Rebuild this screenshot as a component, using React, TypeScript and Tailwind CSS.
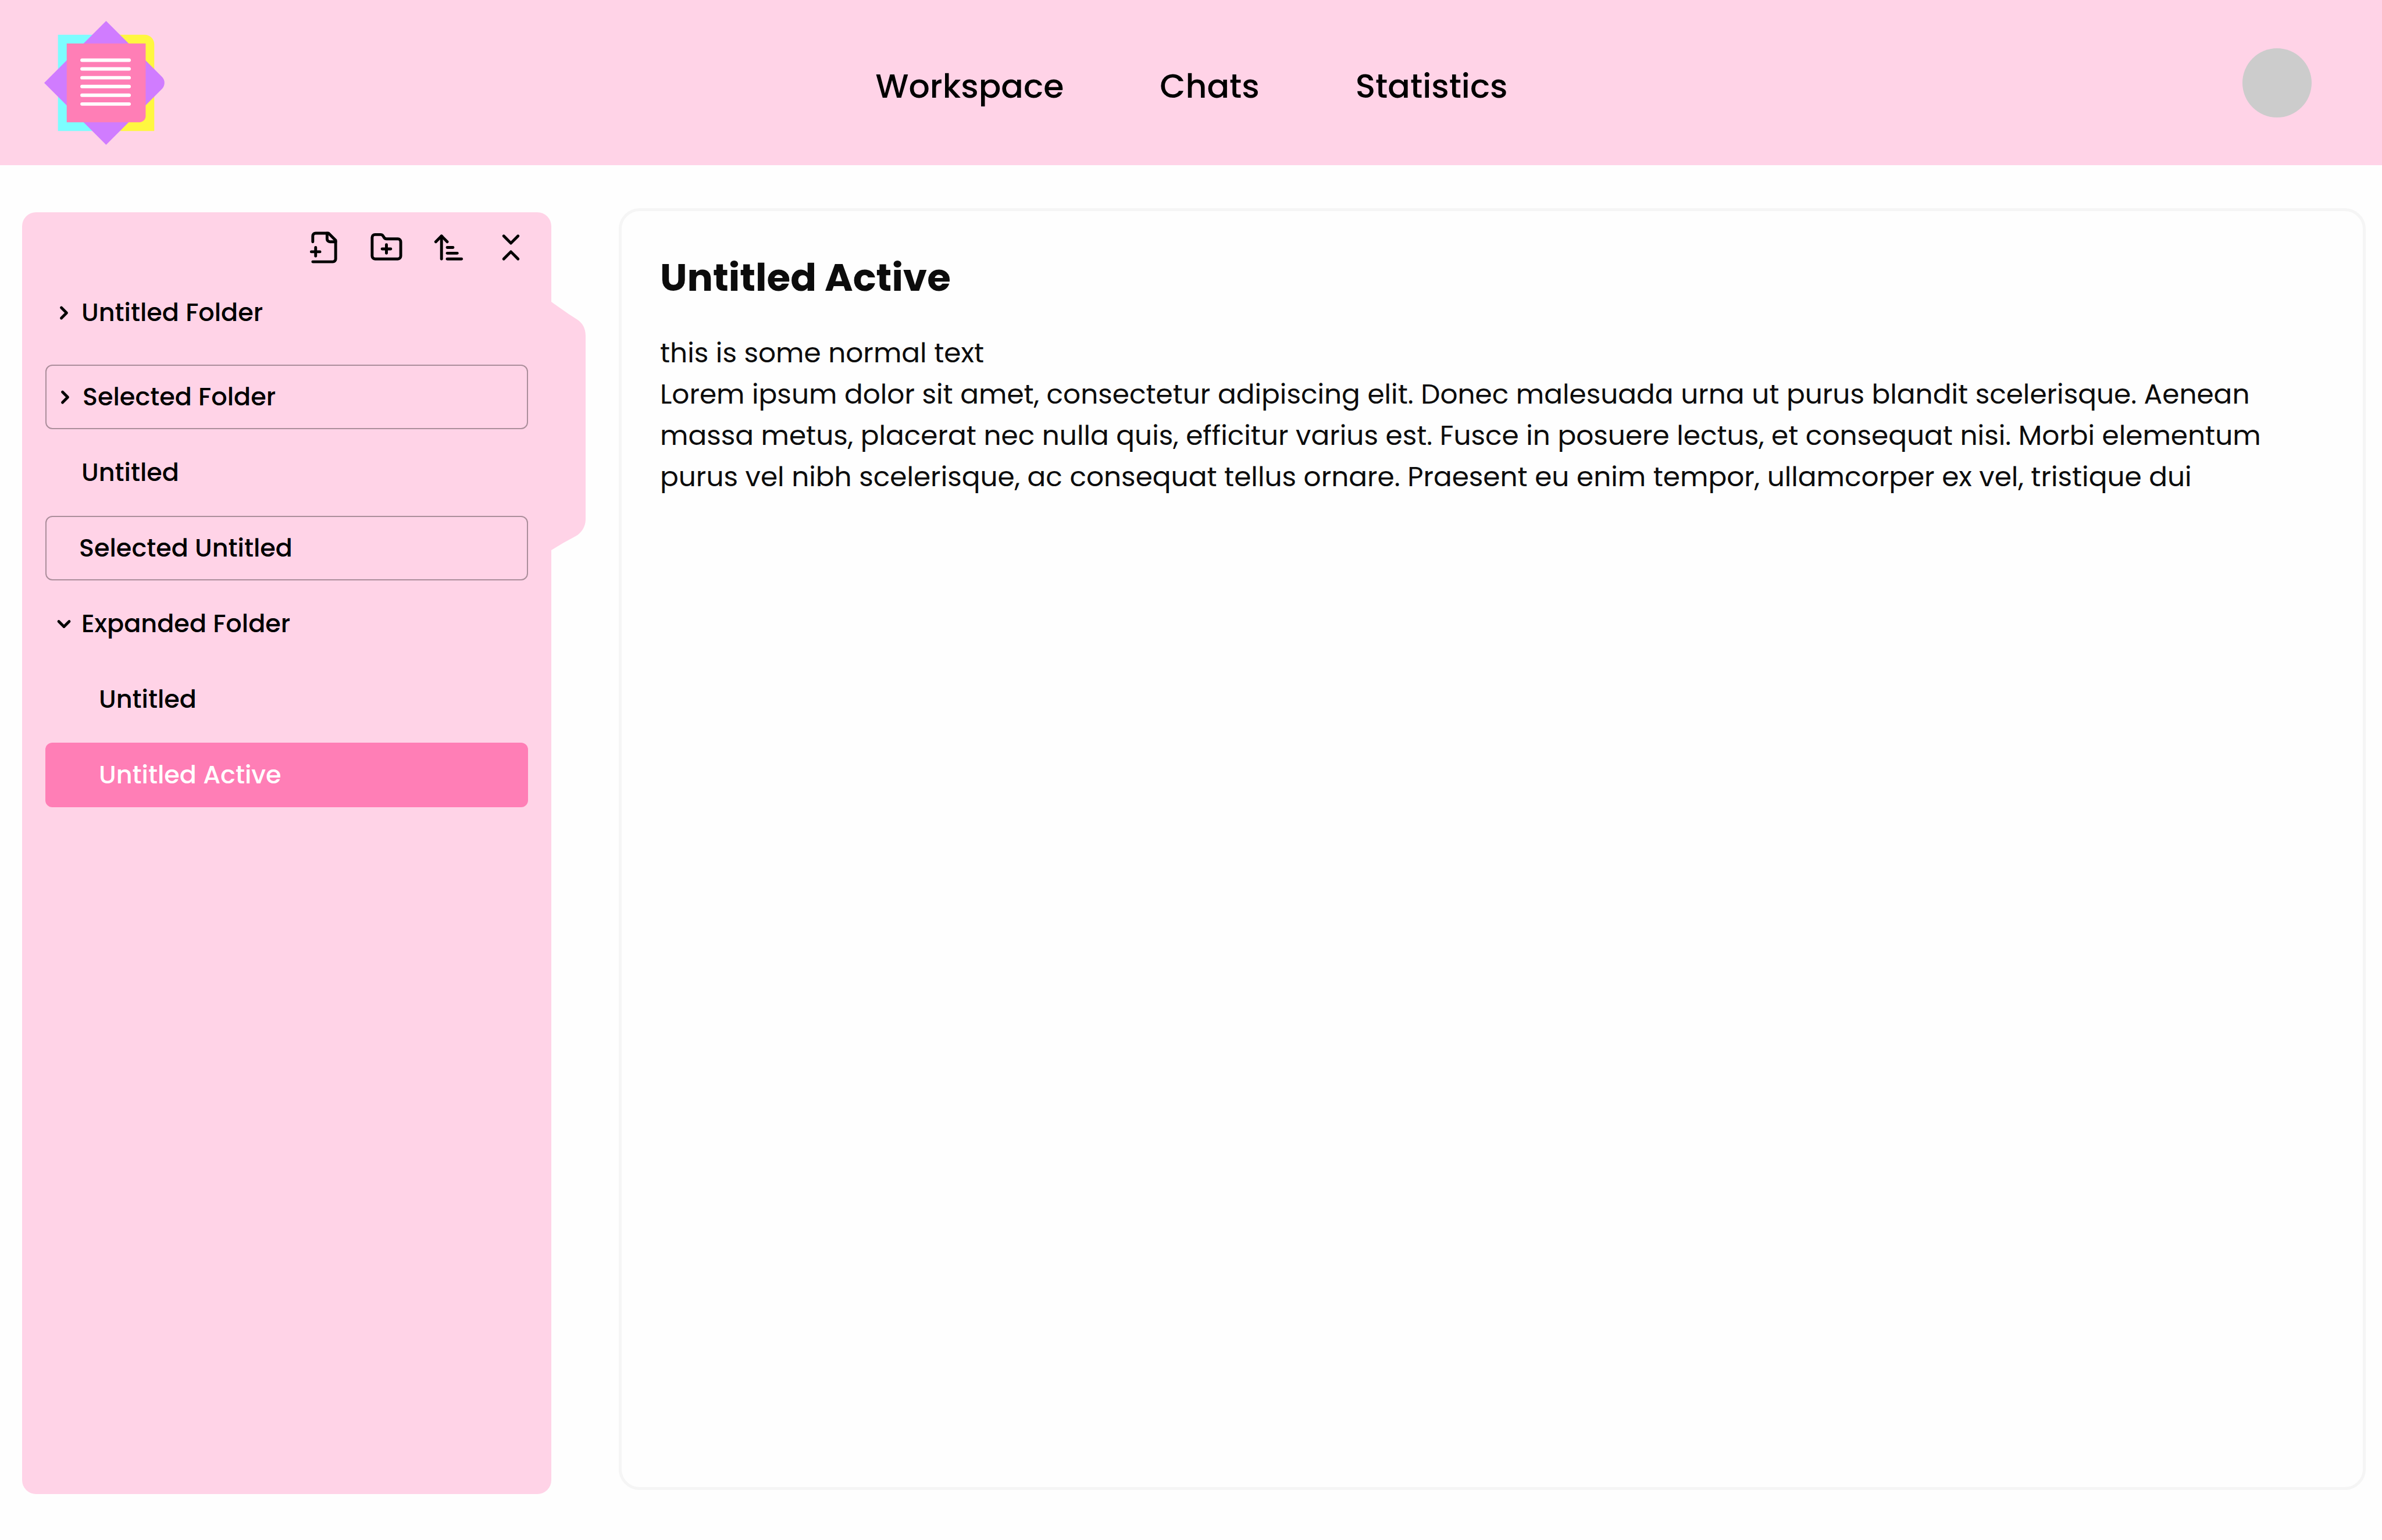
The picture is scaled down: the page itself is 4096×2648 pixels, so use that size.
import React from "react";
import { clsx } from "clsx";

type TreeItem = {
  label: string;
  kind: "folder" | "page";
  open?: boolean;
  nested?: boolean;
  state?: "selected" | "active";
};

const navLinks = ["Workspace", "Chats", "Statistics"];

const otherItems: TreeItem[] = [
  { label: "Selected Folder", kind: "folder", state: "selected" },
  { label: "Untitled", kind: "page" },
  { label: "Selected Untitled", kind: "page", state: "selected" },
  { label: "Expanded Folder", kind: "folder", open: true },
  { label: "Untitled", kind: "page", nested: true },
  { label: "Untitled Active", kind: "page", nested: true, state: "active" },
];

const tools = [
  {
    label: "New page",
    paths: [
      "M4 22h14a2 2 0 0 0 2-2V7l-5-5H6a2 2 0 0 0-2 2v4",
      "M14 2v4a2 2 0 0 0 2 2h4",
      "M3 15h6",
      "M6 12v6",
    ],
  },
  {
    label: "New folder",
    paths: [
      "M12 10v6",
      "M9 13h6",
      "M20 20a2 2 0 0 0 2-2V8a2 2 0 0 0-2-2h-7.9a2 2 0 0 1-1.69-.9L9.6 3.9A2 2 0 0 0 7.93 3H4a2 2 0 0 0-2 2v13a2 2 0 0 0 2 2Z",
    ],
  },
  {
    label: "Sort",
    paths: ["m3 8 4-4 4 4", "M7 4v16", "M11 12h4", "M11 16h7", "M11 20h10"],
  },
  { label: "Collapse all", paths: ["m7 20 5-5 5 5", "m7 4 5 5 5-5"] },
];

function Logo() {
  return (
    <svg viewBox="128 60 350 360" className="h-[213px] w-[207px]" aria-hidden="true">
      <path d="M168 100H308V380H168Z" fill="#7cfdff" />
      <path d="M308 100H420A28 28 0 0 1 448 128V380H308Z" fill="#fff740" />
      <path d="M308 60 470.3 222.3A25 25 0 0 1 470.3 257.7L308 420 128 240Z" fill="#d07cff" />
      <path d="M193.5 125.5H423V336.5A18 18 0 0 1 405 354.5H193.5Z" fill="#ff7eb6" />
      {[174, 199.5, 225, 250.5, 276, 301.5].map((y) => (
        <path key={y} d={`M238 ${y}H375`} stroke="#fff" strokeWidth="10" strokeLinecap="round" />
      ))}
    </svg>
  );
}

function Header() {
  return (
    <header className="grid h-[284px] shrink-0 grid-cols-[1fr_auto_1fr] items-center bg-[#ffd3e7] pr-[121px] pl-[76px]">
      <a href="#home" aria-label="Home" className="justify-self-start">
        <Logo />
      </a>
      <nav className="flex gap-[165px] pt-3 pl-[47px] text-[57px] leading-[86px] font-medium">
        {navLinks.map((label) => (
          <a key={label} href={`#${label.toLowerCase()}`}>
            {label}
          </a>
        ))}
      </nav>
      <button
        type="button"
        aria-label="Account"
        className="size-[119px] justify-self-end rounded-full bg-[#cccccc]"
      />
    </header>
  );
}

function Chevron({ open }: { open?: boolean }) {
  return (
    <svg
      viewBox="0 0 24 24"
      className="size-9 shrink-0"
      fill="none"
      stroke="currentColor"
      strokeWidth="3.2"
      strokeLinecap="round"
      strokeLinejoin="round"
      aria-hidden="true"
    >
      <path d={open ? "m6 9 6 6 6-6" : "m9 18 6-6-6-6"} />
    </svg>
  );
}

function TreeRow({ item }: { item: TreeItem }) {
  const { label, kind, open, nested, state } = item;
  return (
    <li>
      <button
        type="button"
        aria-expanded={kind === "folder" ? Boolean(open) : undefined}
        className={clsx(
          "flex h-[111px] w-full items-center gap-3 rounded-xl text-left",
          kind === "folder" && "pl-[14px]",
          kind === "page" && !nested && (state === "selected" ? "pl-14" : "pl-[62px]"),
          nested && "pl-[92px]",
          state === "selected" && "border-2 border-[#ab8e9b]",
          state === "active" && "bg-[#ff7eb6] text-white",
        )}
      >
        {kind === "folder" && <Chevron open={open} />}
        {label}
      </button>
    </li>
  );
}

function Sidebar() {
  return (
    <aside className="relative mt-[7px] w-[910px] shrink-0 rounded-3xl bg-[#ffd3e7] px-10 pt-[31px]">
      <div className="flex justify-end gap-12">
        {tools.map((tool) => (
          <button key={tool.label} type="button" aria-label={tool.label}>
            <svg
              viewBox="0 0 24 24"
              className="size-[59px]"
              fill="none"
              stroke="currentColor"
              strokeWidth="2"
              strokeLinecap="round"
              strokeLinejoin="round"
              aria-hidden="true"
            >
              {tool.paths.map((d) => (
                <path key={d} d={d} />
              ))}
            </svg>
          </button>
        ))}
      </div>
      <ul className="mt-[27px] text-[43px] leading-[65px] font-medium">
        <TreeRow item={{ label: "Untitled Folder", kind: "folder" }} />
      </ul>
      <ul className="mt-[34px] flex flex-col gap-[19px] text-[43px] leading-[65px] font-medium">
        {otherItems.map((item, i) => (
          <TreeRow key={i} item={item} />
        ))}
      </ul>
      <button type="button" aria-label="Toggle sidebar" className="absolute top-[154px] left-full">
        <svg
          viewBox="0 0 100 720"
          preserveAspectRatio="none"
          className="h-[427px] w-[59px]"
          fill="#ffd3e7"
          aria-hidden="true"
        >
          <path d="M0 0 50 35 75 51C92 62 100 78 100 99V630C100 652 88 670 70 680L35 699 0 720Z" />
        </svg>
      </button>
    </aside>
  );
}

export default function App() {
  return (
    <div className="flex min-h-screen flex-col bg-[#fefefe] font-['Poppins','Inter',sans-serif] text-black">
      <Header />
      <div className="flex flex-1 gap-[116px] pt-[74px] pr-7 pb-[79px] pl-[38px]">
        <Sidebar />
        <main className="mb-[7px] min-w-0 flex-1 rounded-[36px] border-5 border-[#f5f5f5] px-[66px] pt-[65px] text-[#0c0c0c]">
          <h1 className="text-[66px] leading-[99px] font-bold">Untitled Active</h1>
          <div className="mt-11 text-[47px] leading-[71px]">
            <p>this is some normal text</p>
            <p>
              Lorem ipsum dolor sit amet, consectetur adipiscing elit. Donec malesuada urna ut purus
              blandit scelerisque. Aenean massa metus, placerat nec nulla quis, efficitur varius est.
              Fusce in posuere lectus, et consequat nisi. Morbi elementum purus vel nibh scelerisque,
              ac consequat tellus ornare. Praesent eu enim tempor, ullamcorper ex vel, tristique dui
            </p>
          </div>
        </main>
      </div>
    </div>
  );
}
